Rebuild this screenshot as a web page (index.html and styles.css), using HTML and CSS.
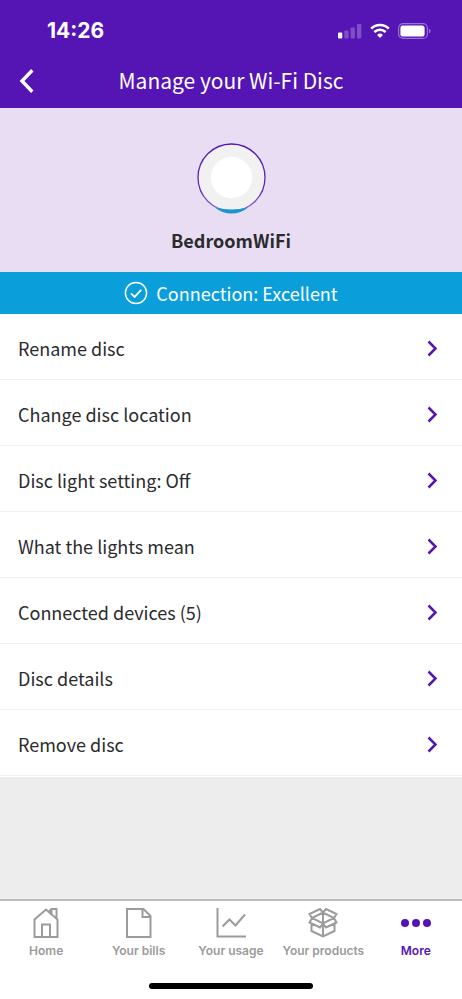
FILE: index.html
```html
<!DOCTYPE html>
<html lang="en">
<head>
<meta charset="utf-8">
<meta name="viewport" content="width=device-width, initial-scale=1">
<title>Manage your Wi-Fi Disc</title>
<link rel="stylesheet" href="styles.css">
</head>
<body>
<header class="header">
  <div class="status">
    <span class="time">14:26</span>
    <div class="indicators">
      <svg width="24" height="16" viewBox="0 0 24 16" fill="#fff" aria-hidden="true"><rect x="0" y="9.500" width="4.300" height="6" rx="1"/><g opacity=".25"><rect x="6.300" y="7.500" width="4.300" height="8" rx="1"/><rect x="12.600" y="4.500" width="4.300" height="11" rx="1"/><rect x="19" y="1" width="4.300" height="14.500" rx="1"/></g></svg>
      <svg width="20" height="16" viewBox="0 0 20 16" fill="none" stroke="#fff" stroke-width="2.6" aria-hidden="true"><path d="M1.2 5.6a12.5 12.5 0 0 1 17.6 0"/><path d="M4.4 9a8 8 0 0 1 11.2 0"/><path d="M10 15l-2.9-3a4.1 4.1 0 0 1 5.8 0z" fill="#fff" stroke="none"/></svg>
      <svg width="33" height="16" viewBox="0 0 33 16" aria-hidden="true"><rect x=".6" y=".6" width="28.8" height="14.8" rx="4.5" fill="none" stroke="#fff" stroke-opacity=".4" stroke-width="1.2"/><rect x="2.4" y="2.4" width="24.2" height="11.2" rx="2.6" fill="#fff"/><path d="M31 5.5v5q1.6-.6 1.6-2.5T31 5.5z" fill="#fff" opacity=".4"/></svg>
    </div>
  </div>
  <div class="titlebar">
    <button class="back" type="button" aria-label="Back"><svg width="16" height="24" viewBox="0 0 16 24" fill="none" stroke="#fff" stroke-width="3.4" stroke-linejoin="miter"><path d="M14.300 1.300L4 12l10.300 10.700"/></svg></button>
    <h1 class="title">Manage your Wi-Fi Disc</h1>
  </div>
</header>
<main class="main">
  <section class="hero">
    <svg width="72" height="74" viewBox="0 0 72 74" aria-hidden="true">
      <defs><linearGradient id="ring" x2="0" y2="1"><stop offset="0" stop-color="#5514b4"/><stop offset=".7" stop-color="#5b2bb5"/><stop offset="1" stop-color="#8878cf"/></linearGradient></defs>
      <circle cx="36.500" cy="35.500" r="33.500" fill="#f1f1f1" stroke="url(#ring)" stroke-width="1.3"/>
      <path d="M20 65.500Q36.500 69.500 53 65.500Q46 71.600 36.500 71.600T20 65.500z" fill="#1a96cf"/>
      <circle cx="36.500" cy="35.500" r="20.700" fill="#fff"/>
    </svg>
    <h2 class="name">BedroomWiFi</h2>
  </section>
  <p class="connection">
    <svg width="24" height="24" viewBox="0 0 24 24" fill="none" stroke="#fff" stroke-width="1.500" aria-hidden="true"><circle cx="12" cy="12" r="10.600"/><path d="M7 12.300l3.600 3.600 6.600-7" stroke-width="1.800"/></svg>
    Connection: Excellent
  </p>
  <nav class="list" aria-label="Disc settings">
    <a class="row" href="#rename">Rename disc<svg class="chevron" viewBox="0 0 12 18"><path d="M2.500 2.500l7 7-7 7"/></svg></a>
    <a class="row" href="#location">Change disc location<svg class="chevron" viewBox="0 0 12 18"><path d="M2.500 2.500l7 7-7 7"/></svg></a>
    <a class="row" href="#light">Disc light setting: Off<svg class="chevron" viewBox="0 0 12 18"><path d="M2.500 2.500l7 7-7 7"/></svg></a>
    <a class="row" href="#meaning">What the lights mean<svg class="chevron" viewBox="0 0 12 18"><path d="M2.500 2.500l7 7-7 7"/></svg></a>
    <a class="row" href="#devices">Connected devices (5)<svg class="chevron" viewBox="0 0 12 18"><path d="M2.500 2.500l7 7-7 7"/></svg></a>
    <a class="row" href="#details">Disc details<svg class="chevron" viewBox="0 0 12 18"><path d="M2.500 2.500l7 7-7 7"/></svg></a>
    <a class="row" href="#remove">Remove disc<svg class="chevron" viewBox="0 0 12 18"><path d="M2.500 2.500l7 7-7 7"/></svg></a>
  </nav>
</main>
<footer class="footer">
  <nav class="tabs" aria-label="Main">
    <a class="tab" href="#home"><svg class="icon" viewBox="0 0 32 32"><path d="M4.500 30V12.500L16 2.500l11.500 10V30zM12 30V17.500h8V30M19 4.500l2.500-2.500h5v9M21.500 7V2.500"/></svg>Home</a>
    <a class="tab" href="#bills"><svg class="icon" viewBox="0 0 32 32"><path d="M4 2h16.500l7 7v21H4zM19.500 2v8h8"/></svg>Your bills</a>
    <a class="tab" href="#usage"><svg class="icon" viewBox="0 0 32 32"><path d="M2.500 1v28.500H31M7.500 19.500l7-7 6 6L30 7.500"/></svg>Your usage</a>
    <a class="tab" href="#products"><svg class="icon" viewBox="0 0 32 32"><path d="M16 5.500L13 2 2.500 7 5 11l11 5.500L27 11l2.500-4L19 2zM16 5.500L5 11l-2.500 4.500L13 20.500l3-4 3 4 10.500-5L27 11zM16 5.500v24M4.500 17v7L16 29.500 27.500 24v-7"/></svg>Your products</a>
    <a class="tab active" href="#more" aria-current="page"><svg class="icon" viewBox="0 0 32 32"><g fill="currentColor" stroke="none"><circle cx="5" cy="16" r="4"/><circle cx="16" cy="16" r="4"/><circle cx="27" cy="16" r="4"/></g></svg>More</a>
  </nav>
  <div class="home-indicator"></div>
</footer>
</body>
</html>
```
FILE: styles.css
```css
* { box-sizing: border-box; }
body {
  margin: 0;
  min-height: 100vh;
  display: flex;
  flex-direction: column;
  background: #ededed;
  color: #2b2b2e;
  font-family: "Noto Sans CJK SC", "Open Sans", sans-serif;
  font-size: 18px;
  line-height: 24px;
}
h1, h2, p { margin: 0; font-weight: 400; }
svg { display: block; flex: none; }
a { color: inherit; text-decoration: none; }
.header { background: #5514b4; color: #fff; }
.status {
  display: flex;
  justify-content: space-between;
  align-items: center;
  height: 54px;
  padding: 8px 31px 0 47px;
}
.time { font: 700 21px/24px Inter, sans-serif; }
.indicators { display: flex; align-items: center; gap: 8px; }
.titlebar {
  display: grid;
  grid-template-columns: 48px 1fr 48px;
  align-items: center;
  height: 54px;
}
.back {
  display: flex;
  padding: 0 0 0 18px;
  border: 0;
  background: none;
}
.title { padding-bottom: 2px; text-align: center; font-size: 21px; }
.hero {
  display: flex;
  flex-direction: column;
  align-items: center;
  gap: 12px;
  padding: 34px 16px 20px;
  background: #e8ddf3;
}
.name { font-size: 18px; font-weight: 700; }
.connection {
  display: flex;
  justify-content: center;
  align-items: center;
  gap: 8px;
  height: 42px;
  background: #0a9fdb;
  color: #fff;
}
.list { padding-bottom: 1px; background: #fff; }
.row {
  display: flex;
  justify-content: space-between;
  align-items: center;
  height: 66px;
  padding: 3px 24px 0 18px;
  border-bottom: 1px solid #f1f1f1;
}
.chevron {
  width: 12px;
  height: 18px;
  fill: none;
  stroke: #5514b4;
  stroke-width: 2.5;
}
.footer {
  margin-top: auto;
  padding-bottom: 10px;
  border-top: 2px solid #bdbdbd;
  background: #fff;
}
.tabs {
  display: grid;
  grid-template-columns: repeat(5, 1fr);
  height: 82px;
}
.tab {
  display: flex;
  flex-direction: column;
  align-items: center;
  gap: 4px;
  padding-top: 6px;
  color: #9b9b9b;
  font: 600 12px/16px Inter, sans-serif;
  white-space: nowrap;
}
.active { color: #5514b4; }
.icon {
  width: 32px;
  height: 32px;
  fill: none;
  stroke: currentColor;
  stroke-width: 2;
}
.home-indicator {
  width: 164px;
  height: 6px;
  margin: 0 auto;
  border-radius: 3px;
  background: #000;
}
```
